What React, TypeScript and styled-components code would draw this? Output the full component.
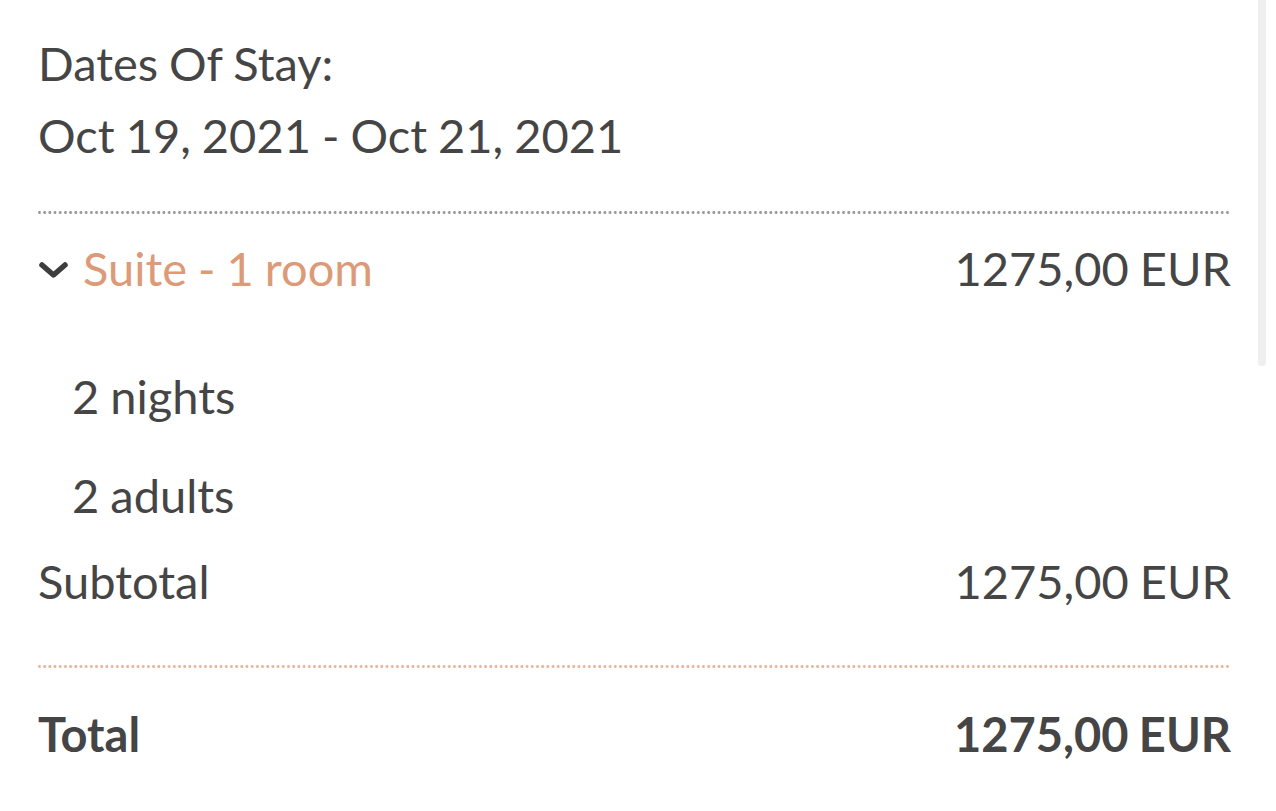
import styled, { createGlobalStyle } from 'styled-components';

const GlobalStyle = createGlobalStyle`
  html, body {
    margin: 0;
    padding: 0;
    background: #fff;
  }
  body {
    font-family: Lato, "Open Sans", sans-serif;
    color: #454545;
    overflow: hidden;
  }
`;

const Page = styled.div`
  position: relative;
  width: 1276px;
  height: 811px;
  overflow: hidden;
`;

const Summary = styled.div`
  padding: 27px 45px 0 38px;
  font-size: 47px;
  line-height: 72px;
  word-spacing: -1px;
`;

const Line = styled.div`
  white-space: nowrap;
`;

const Divider = styled.div<{ $color: string; $top: number }>`
  margin-top: ${(p) => p.$top}px;
  height: 3px;
  background-image: radial-gradient(circle at 1.5px 1.5px, ${(p) => p.$color} 1.3px, transparent 1.6px);
  background-size: 5.2px 3px;
  background-repeat: repeat-x;
`;

const Row = styled.div<{ $top: number; $bold?: boolean }>`
  display: flex;
  align-items: center;
  justify-content: space-between;
  margin-top: ${(p) => p.$top}px;
  font-weight: ${(p) => (p.$bold ? 700 : 400)};
`;

const RoomToggle = styled.button`
  display: flex;
  align-items: center;
  gap: 14px;
  padding: 0;
  border: 0;
  background: none;
  font: inherit;
  line-height: inherit;
  word-spacing: inherit;
  color: #dc9a78;
  cursor: pointer;
`;

const Chevron = styled.svg`
  width: 31px;
  height: 20px;
  margin-top: 4px;
`;

const Detail = styled.div<{ $top: number }>`
  margin-top: ${(p) => p.$top}px;
  padding-left: 34px;
`;

const ScrollThumb = styled.div`
  position: absolute;
  top: 0;
  left: 1258px;
  width: 8px;
  height: 366px;
  border-radius: 0 0 4px 4px;
  background: #efefef;
`;

const App = () => {
  return (
    <Page>
      <GlobalStyle />
      <Summary>
        <Line>Dates Of Stay:</Line>
        <Line>Oct 19, 2021 - Oct 21, 2021</Line>
        <Divider $color="#9a9a9a" $top={40} />
        <Row $top={18}>
          <RoomToggle>
            <Chevron viewBox="0 0 31 20">
              <polyline
                points="4,5 15.5,15 27,5"
                fill="none"
                stroke="#3d3d3d"
                strokeWidth="5.5"
                strokeLinecap="round"
                strokeLinejoin="round"
              />
            </Chevron>
            Suite - 1 room
          </RoomToggle>
          <span>1275,00 EUR</span>
        </Row>
        <Detail $top={56}>2 nights</Detail>
        <Detail $top={27}>2 adults</Detail>
        <Row $top={14}>
          <span>Subtotal</span>
          <span>1275,00 EUR</span>
        </Row>
        <Divider $color="#eab59a" $top={48} />
        <Row $top={30} $bold>
          <span>Total</span>
          <span>1275,00 EUR</span>
        </Row>
      </Summary>
      <ScrollThumb />
    </Page>
  );
};

export default App;
